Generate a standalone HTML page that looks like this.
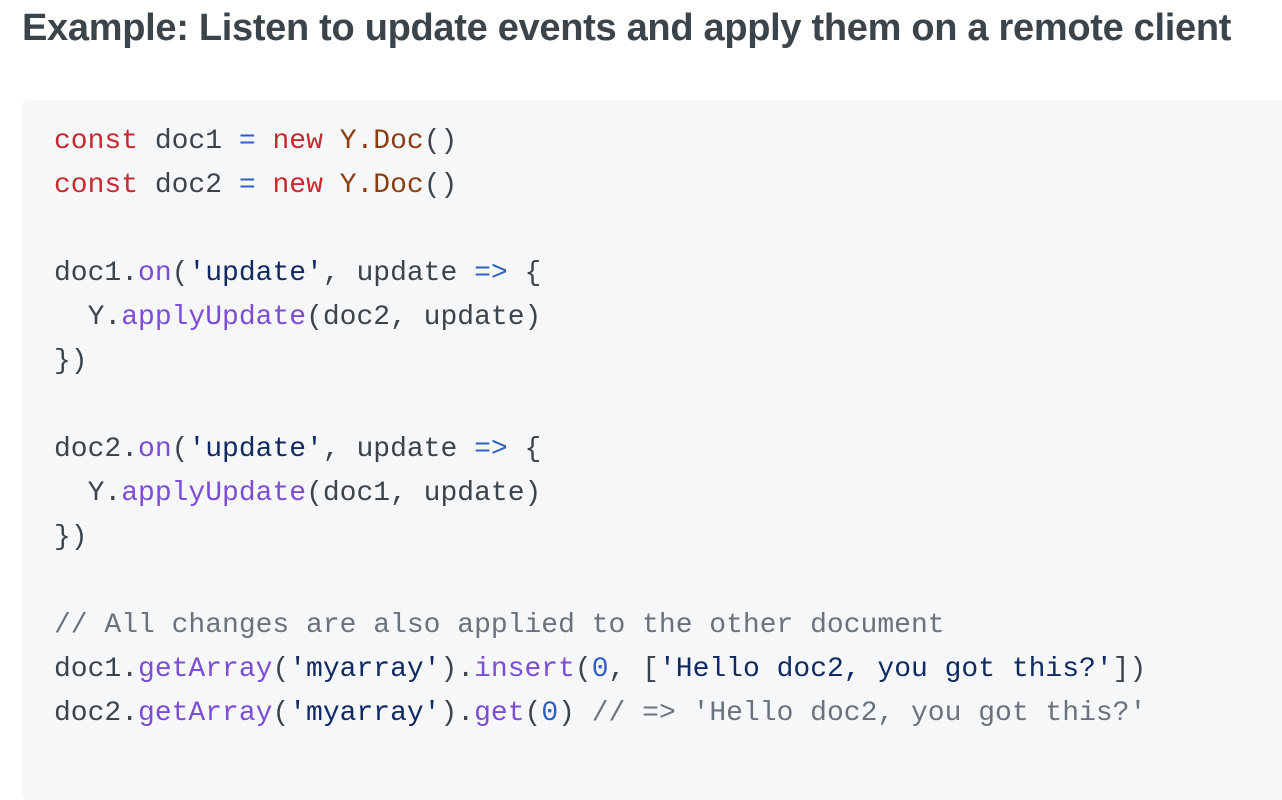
<!DOCTYPE html>
<html><head><meta charset="utf-8"><style>
html,body{margin:0;padding:0;background:#fff;width:1282px;height:744px;overflow:hidden}
h1{position:absolute;left:22px;top:4px;margin:0;font:bold 38px/48px "Liberation Sans",sans-serif;color:#3b434b;white-space:nowrap;letter-spacing:-0.3px}
pre{position:absolute;left:22px;top:100px;width:1300px;height:700px;margin:0;background:#f6f7f9;border-radius:6px;
font:28px/44px "Liberation Mono",monospace;color:#3b434b;padding:20px 0 0 32px;box-sizing:border-box}
.k{color:#c7292f}.c{color:#8b3c10}.o{color:#2d5fc4}.f{color:#7c4dd6}.s{color:#0f2a63}.n{color:#2d5fc4}.g{color:#6a737d}
</style></head><body>
<h1>Example: Listen to update events and apply them on a remote client</h1>
<pre><span class="k">const</span> doc1 <span class="o">=</span> <span class="k">new</span> <span class="c">Y.Doc</span>()
<span class="k">const</span> doc2 <span class="o">=</span> <span class="k">new</span> <span class="c">Y.Doc</span>()

doc1.<span class="f">on</span>(<span class="s">'update'</span>, update <span class="o">=&gt;</span> {
  Y.<span class="f">applyUpdate</span>(doc2, update)
})

doc2.<span class="f">on</span>(<span class="s">'update'</span>, update <span class="o">=&gt;</span> {
  Y.<span class="f">applyUpdate</span>(doc1, update)
})

<span class="g">// All changes are also applied to the other document</span>
doc1.<span class="f">getArray</span>(<span class="s">'myarray'</span>).<span class="f">insert</span>(<span class="n">0</span>, [<span class="s">'Hello doc2, you got this?'</span>])
doc2.<span class="f">getArray</span>(<span class="s">'myarray'</span>).<span class="f">get</span>(<span class="n">0</span>) <span class="g">// =&gt; 'Hello doc2, you got this?'</span>
</pre>
</body></html>
